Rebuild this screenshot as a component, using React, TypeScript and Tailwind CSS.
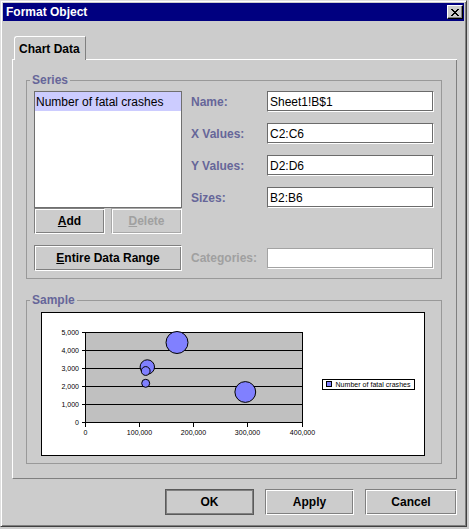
import React from "react";

const labelCls = "w-[76px] shrink-0 text-[12px] font-bold text-[#666699]";
const fieldCls =
  "h-[21px] w-0 min-w-0 flex-1 border border-t-[#6b6b6b] border-l-[#6b6b6b] border-b-white border-r-white bg-white px-[2px] text-[12px] text-black shadow-[inset_-1px_-1px_0_#6b6b6b] outline-none";
const btnCls =
  "flex h-[26px] items-center justify-center border border-t-[#808080] border-l-[#808080] border-b-white border-r-white text-[12px] font-bold text-black shadow-[inset_1px_1px_0_#ffffff,inset_-1px_-1px_0_#808080]";
const btnOffCls =
  "flex h-[26px] items-center justify-center border border-t-[#a8a8a8] border-l-[#a8a8a8] border-b-white border-r-white text-[12px] font-bold text-[#a0a0a0] shadow-[inset_1px_1px_0_#ffffff,inset_-1px_-1px_0_#a8a8a8]";

function CloseGlyph() {
  const px = [
    [0, 0], [1, 0], [6, 0], [7, 0],
    [1, 1], [2, 1], [5, 1], [6, 1],
    [2, 2], [3, 2], [4, 2], [5, 2],
    [3, 3], [4, 3],
    [2, 4], [3, 4], [4, 4], [5, 4],
    [1, 5], [2, 5], [5, 5], [6, 5],
    [0, 6], [1, 6], [6, 6], [7, 6],
  ];
  return (
    <svg width="8" height="7" viewBox="0 0 8 7" shapeRendering="crispEdges">
      {px.map(([x, y]) => (
        <rect key={`${x}-${y}`} x={x} y={y} width="1" height="1" fill="#000" />
      ))}
    </svg>
  );
}

function Chart() {
  const yTicks = [
    { y: 19, label: "5,000" },
    { y: 37, label: "4,000" },
    { y: 55, label: "3,000" },
    { y: 73, label: "2,000" },
    { y: 91, label: "1,000" },
    { y: 109, label: "0" },
  ];
  const xTicks = [
    { x: 43, label: "0" },
    { x: 97, label: "100,000" },
    { x: 151, label: "200,000" },
    { x: 205, label: "300,000" },
    { x: 260, label: "400,000" },
  ];
  const bubbles = [
    { cx: 135, cy: 29.5, r: 11 },
    { cx: 105.3, cy: 54, r: 7.2 },
    { cx: 103.7, cy: 58, r: 4.4 },
    { cx: 103.7, cy: 70.3, r: 4 },
    { cx: 203.3, cy: 79, r: 10.4 },
  ];
  return (
    <svg width="382" height="142" viewBox="0 0 382 142" fontFamily="'Liberation Sans', Arial, sans-serif">
      <rect x="43.5" y="19.5" width="217" height="90" fill="#c0c0c0" stroke="#000" />
      {yTicks.map((t) => (
        <g key={t.label}>
          <line x1="40" y1={t.y + 0.5} x2="260.5" y2={t.y + 0.5} stroke="#000" />
          <text x="37" y={t.y + 3} fontSize="7" textAnchor="end" fill="#000">
            {t.label}
          </text>
        </g>
      ))}
      {xTicks.map((t) => (
        <g key={t.label}>
          <line x1={t.x + 0.5} y1="109.5" x2={t.x + 0.5} y2="114" stroke="#000" />
          <text x={t.x + 0.5} y="122" fontSize="7" textAnchor="middle" fill="#000">
            {t.label}
          </text>
        </g>
      ))}
      {bubbles.map((b, i) => (
        <circle key={i} cx={b.cx} cy={b.cy} r={b.r} fill="#8080ff" stroke="#000" />
      ))}
      <rect x="280.5" y="66.5" width="92" height="10" fill="#fff" stroke="#000" />
      <rect x="284.5" y="68.5" width="5" height="5" fill="#8080ff" stroke="#000" />
      <text x="293.5" y="74" fontSize="7" fill="#000" textLength="75">
        Number of fatal crashes
      </text>
    </svg>
  );
}

export default function App() {
  return (
    <div className="h-[529px] w-[469px] bg-[#cccccc] font-['Liberation_Sans',Arial,sans-serif]">
      <div className="flex h-[527px] w-[467px] flex-col border border-t-[#dfdfdf] border-l-[#dfdfdf] border-b-[#404040] border-r-[#404040] bg-[#cccccc] shadow-[inset_1px_1px_0_#ffffff,inset_-1px_-1px_0_#808080]">
        {/* title bar */}
        <div className="mx-[2px] mt-[2px] flex h-[18px] items-center justify-between bg-[#000080] pl-[3px] pr-[1px]">
          <span className="text-[12px] font-bold text-white">Format Object</span>
          <button className="flex h-[14px] w-[16px] items-center justify-center border border-t-white border-l-white border-b-black border-r-black bg-[#cccccc] shadow-[inset_-1px_-1px_0_#808080]">
            <CloseGlyph />
          </button>
        </div>

        <div className="flex flex-1 flex-col pl-[11px] pr-[9px]">
          {/* tab row */}
          <div className="mt-[15px] flex h-[24px]">
            <div className="w-[2px] border-b border-b-white" />
            <div className="flex w-[72px] items-center rounded-tl-[3px] border-t border-l border-r border-t-white border-l-white border-r-[#808080] pl-[4px] text-[12px] font-bold text-black">
              Chart Data
            </div>
            <div className="flex-1 border-b border-b-white" />
          </div>

          {/* tab panel */}
          <div className="flex flex-col border-l border-r border-b border-l-white border-r-[#808080] border-b-[#808080] pl-[13px] pr-[14px] pt-[13px] pb-[14px]">
            <fieldset className="min-w-0 border border-[#999999]">
              <legend className="ml-[3px] px-[2px] text-[12px] leading-[14px] font-bold text-[#666699]">Series</legend>
              <div className="px-[7px] pt-[4px] pb-[7px]">
                <div className="flex">
                  <div className="flex w-[148px] shrink-0 flex-col">
                    <div className="h-[117px] border border-[#6f6f6f] bg-white">
                      <div className="flex h-[19px] items-center bg-[#ccccff] pl-[1px] text-[12px] text-black">
                        Number of fatal crashes
                      </div>
                    </div>
                    <div className="flex gap-[6px]">
                      <button className={`${btnCls} w-[71px]`}>
                        <span className="underline">A</span>dd
                      </button>
                      <button className={`${btnOffCls} w-[71px]`}>
                        <span className="underline">D</span>elete
                      </button>
                    </div>
                  </div>
                  <div className="ml-[9px] flex min-w-0 flex-1 flex-col gap-[11px]">
                    <div className="flex h-[21px] items-center">
                      <span className={labelCls}>Name:</span>
                      <input readOnly value="Sheet1!B$1" className={fieldCls} />
                    </div>
                    <div className="flex h-[21px] items-center">
                      <span className={labelCls}>X Values:</span>
                      <input readOnly value="C2:C6" className={fieldCls} />
                    </div>
                    <div className="flex h-[21px] items-center">
                      <span className={labelCls}>Y Values:</span>
                      <input readOnly value="D2:D6" className={fieldCls} />
                    </div>
                    <div className="flex h-[21px] items-center">
                      <span className={labelCls}>Sizes:</span>
                      <input readOnly value="B2:B6" className={fieldCls} />
                    </div>
                  </div>
                </div>
                <div className="mt-[11px] flex items-center">
                  <button className={`${btnCls} w-[148px] shrink-0`}>
                    <span className="underline">E</span>ntire Data Range
                  </button>
                  <div className="ml-[9px] flex min-w-0 flex-1 items-center">
                    <span className="w-[76px] shrink-0 text-[12px] font-bold text-[#a0a0a0]">Categories:</span>
                    <input
                      readOnly
                      value=""
                      className="h-[21px] w-0 min-w-0 flex-1 border border-t-[#a3a3a3] border-l-[#a3a3a3] border-b-white border-r-white bg-white shadow-[inset_-1px_-1px_0_#a3a3a3] outline-none"
                    />
                  </div>
                </div>
              </div>
            </fieldset>

            <fieldset className="mt-[14px] min-w-0 border border-[#999999]">
              <legend className="ml-[3px] px-[2px] text-[12px] leading-[14px] font-bold text-[#666699]">Sample</legend>
              <div className="px-[14px] pt-[5px] pb-[7px]">
                <div className="h-[144px] w-[384px] border border-black bg-white">
                  <Chart />
                </div>
              </div>
            </fieldset>
          </div>

          {/* dialog buttons */}
          <div className="mt-[10px] flex justify-end gap-[11px]">
            <button className="flex h-[26px] w-[89px] items-center justify-center border border-[#5a5a5a] text-[12px] font-bold text-black shadow-[inset_1px_1px_0_#808080,inset_-1px_-1px_0_#808080]">
              OK
            </button>
            <button className={`${btnCls} w-[89px]`}>Apply</button>
            <button className={`${btnCls} w-[92px]`}>Cancel</button>
          </div>
        </div>
      </div>
    </div>
  );
}
